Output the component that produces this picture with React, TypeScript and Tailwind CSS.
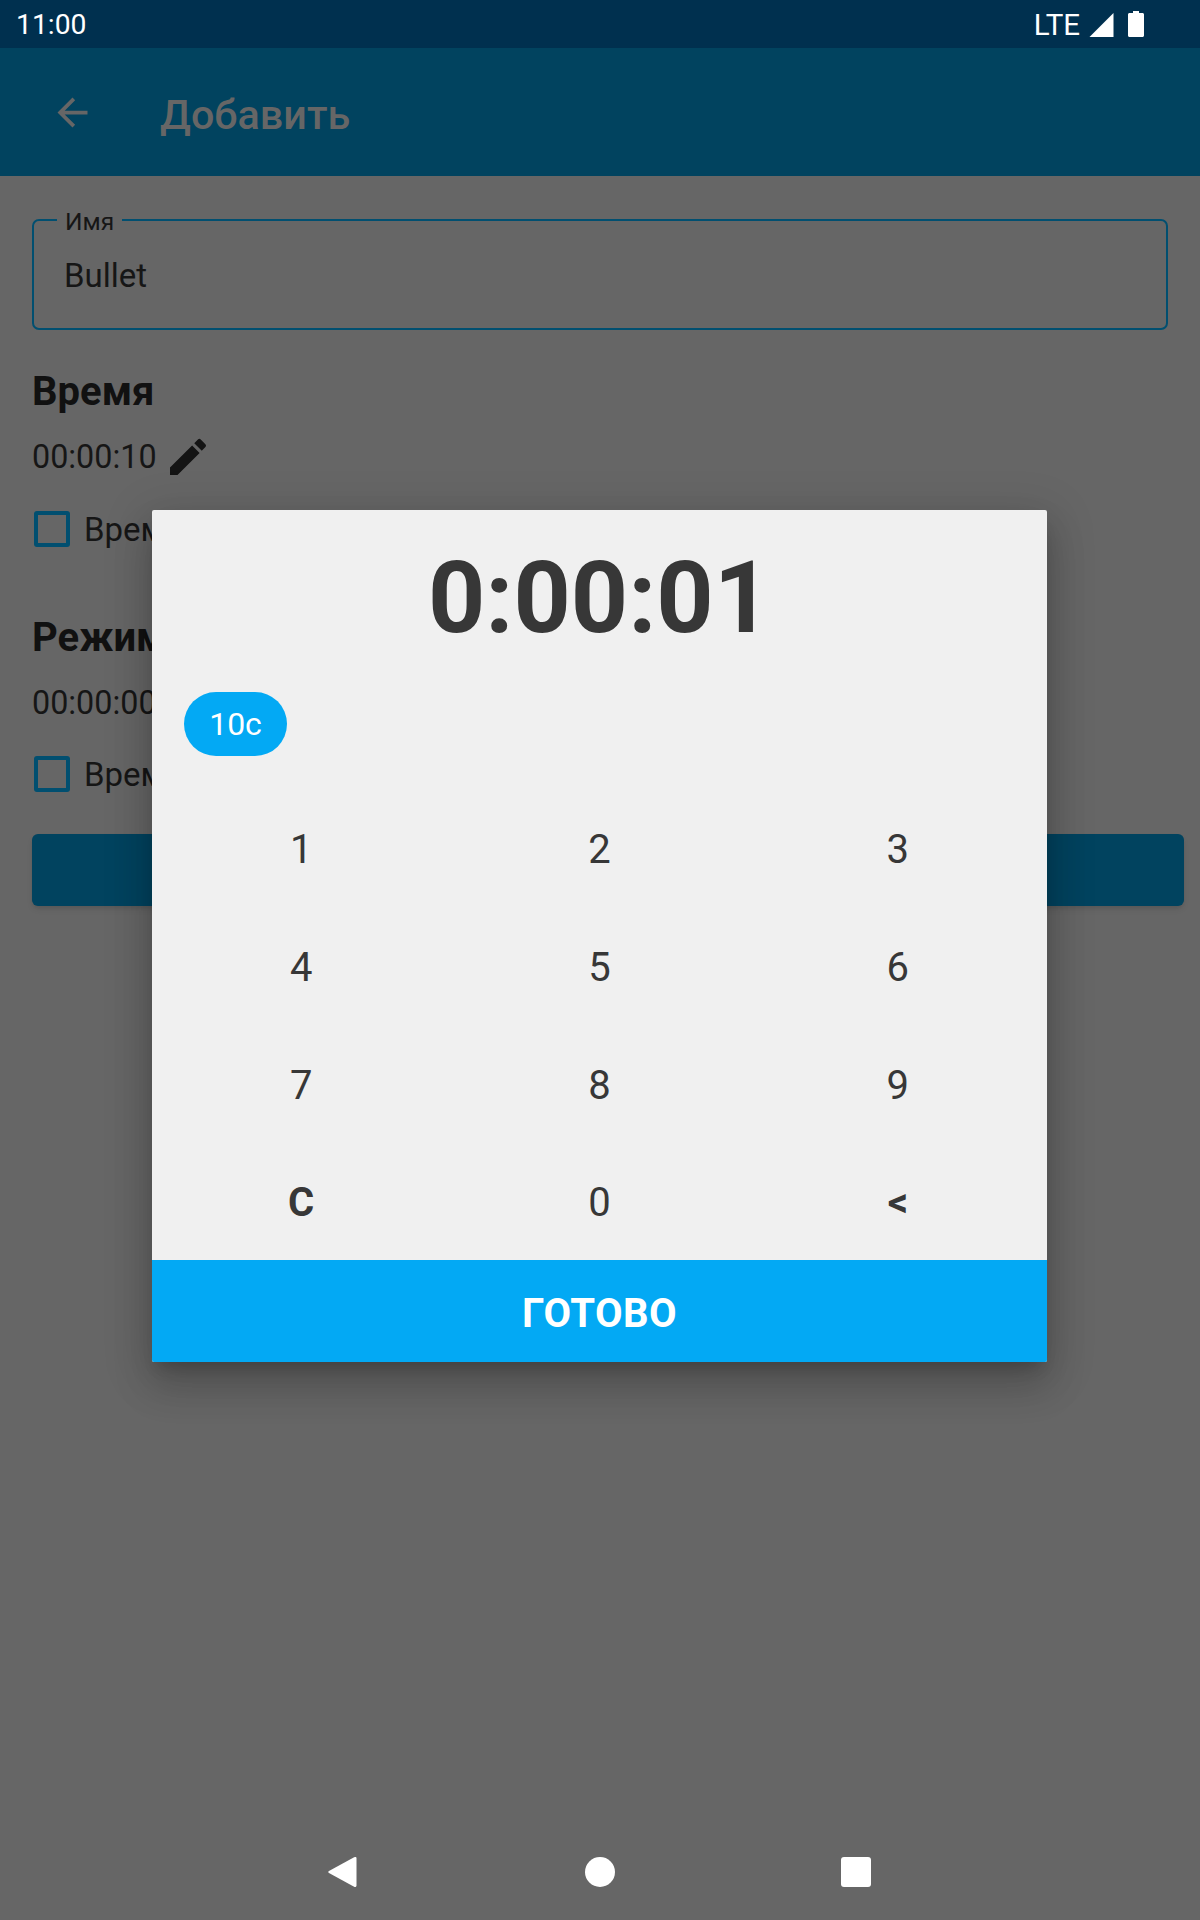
const font = { fontFamily: 'Roboto, sans-serif' };

function Check({ label }: { label: string }) {
  return (
    <div className="flex items-center h-[42px]">
      <div className="w-9 h-9 ml-[2px] rounded-[3px] border-4 border-[#014f70]" />
      <span className="ml-[14px] text-[33px] leading-none text-[#161616]">{label}</span>
    </div>
  );
}

function Key({ label, bold }: { label: string; bold?: boolean }) {
  return (
    <div className={`flex items-center justify-center text-[40px] text-[#373737] ${bold ? 'font-bold' : ''}`}>
      {label}
    </div>
  );
}

export default function App() {
  return (
    <div className="relative w-[1200px] h-[1920px] overflow-hidden bg-[#666666] flex flex-col" style={font}>
      <div className="h-12 bg-[#00304f] flex items-center justify-between text-white">
        <span className="ml-4 mt-[3px] text-[28.300px]">11:00</span>
        <div className="flex items-center mr-[56px]">
          <span className="mt-[2px] text-[29.500px]">LTE</span>
          <svg className="ml-[9px] mt-[1px] w-[25px] h-6" viewBox="0 0 24 24" fill="#fff"><path d="M0 24 24 0v24z" /></svg>
          <svg className="ml-[14px] w-4 h-[26px]" viewBox="0 0 16 26" fill="#fff">
            <path d="M5 0h6v2h3.500c.8 0 1.500.7 1.500 1.500V24.500c0 .8-.7 1.500-1.500 1.500h-13C.7 26 0 25.300 0 24.500V3.500C0 2.700.7 2 1.500 2H5z" />
          </svg>
        </div>
      </div>

      <div className="h-32 bg-[#01435f] flex items-center text-[#666666]">
        <svg className="ml-[50px] w-[45px] h-[45px] mb-[-1px]" viewBox="0 0 24 24" fill="currentColor">
          <path d="M20 11H7.830l5.590-5.590L12 4l-8 8 8 8 1.410-1.410L7.830 13H20v-2z" />
        </svg>
        <span className="ml-[65px] mt-[7px] text-[41.300px] font-medium">Добавить</span>
      </div>

      <div className="pl-8 pr-4 flex-1">
        <div className="relative mt-[43px] w-[1136px] h-[111px] border-2 border-[#014f70] rounded-[7px]">
          <span className="absolute left-[23px] top-[-11px] px-2 bg-[#666666] text-[24.500px] leading-6 text-[#161616]">Имя</span>
          <div className="pl-[30px] pt-[37px] text-[33px] leading-9 text-[#161616]">Bullet</div>
        </div>

        <h2 className="mt-[38px] text-[40px] leading-[48px] font-bold text-[#111111]">Время</h2>
        <div className="mt-[17px] flex items-center h-12 text-[#161616]">
          <span className="text-[32.300px]">00:00:10</span>
          <svg className="ml-[7px] w-[48px] h-[48px]" viewBox="0 0 24 24" fill="#141414">
            <path d="M3 17.250V21h3.750L17.810 9.940l-3.750-3.750L3 17.250zM20.710 7.040a.996.996 0 0 0 0-1.410l-2.340-2.340a.996.996 0 0 0-1.410 0l-1.830 1.830 3.750 3.750 1.830-1.830z" />
          </svg>
        </div>
        <div className="mt-[27px]"><Check label="Время" /></div>

        <h2 className="mt-[64px] text-[40px] leading-[48px] font-bold text-[#111111]">Режим</h2>
        <div className="mt-[17px] flex items-center h-12 text-[32.300px] text-[#161616]">00:00:00</div>
        <div className="mt-[26px]"><Check label="Время" /></div>

        <div className="mt-[39px] h-[72px] bg-[#01435f] rounded-md shadow-md" />
      </div>

      <div className="h-[96px] pr-[2px] flex items-center justify-center gap-[228px]">
        <svg className="w-[29px] h-8" viewBox="0 0 30 32" fill="#fff"><path d="M28 0.500c1 0 1.500.5 1.500 1.500v28c0 1-.9 2-2 1.500L1 17c-1-.6-1-1.400 0-2L27 .7z" /></svg>
        <div className="w-[30px] h-[30px] rounded-full bg-white" />
        <div className="w-[30px] h-[30px] -ml-[2px] rounded-[3px] bg-white" />
      </div>

      <div className="absolute left-[152px] top-[510px] w-[895px] h-[852px] bg-[#f0f0f0] rounded-[2px] shadow-[0_11px_15px_-7px_rgba(0,0,0,0.2),0_24px_38px_3px_rgba(0,0,0,0.14),0_9px_46px_8px_rgba(0,0,0,0.12)] flex flex-col overflow-hidden">
        <div className="h-[176px] flex items-center justify-center text-[100px] font-bold text-[#373737]">0:00:01</div>
        <div className="h-[64px] mt-[6px] ml-8 w-[103px] rounded-full bg-[#03a9f4] text-white text-[32px] flex items-center justify-center">10с</div>
        <div className="grid grid-cols-3 grid-rows-[118px_118px_118px_115px] mt-[35px] h-[469px]">
          <Key label="1" /><Key label="2" /><Key label="3" />
          <Key label="4" /><Key label="5" /><Key label="6" />
          <Key label="7" /><Key label="8" /><Key label="9" />
          <Key label="C" bold /><Key label="0" /><Key label="<" bold />
        </div>
        <div className="h-[102px] pt-[5px] bg-[#03a9f4] text-white text-[40px] tracking-[0.5px] font-bold flex items-center justify-center">ГОТОВО</div>
      </div>
    </div>
  );
}
